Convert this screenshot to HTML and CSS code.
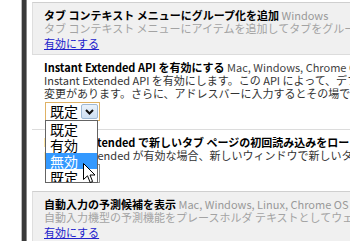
FILE: index.html
```html
<!DOCTYPE html>
<html lang="ja">
<head>
    <meta charset="UTF-8">
    <title>試験運用機能</title>
    <link rel="stylesheet" href="styles.css">
</head>
<body>
    <div class="page">
        <div class="rail"></div>
        <div class="experiments">
            <div class="experiment unsupported">
                <div class="title"><b>タブ コンテキスト メニューにグループ化を追加</b> <span class="platforms">Windows</span></div>
                <div class="desc">タブ コンテキスト メニューにアイテムを追加してタブをグループ化できるようにします。</div>
                <a href="#" class="enable">有効にする</a>
            </div>
            <div class="experiment">
                <div class="title"><b>Instant Extended API を有効にする</b> <span class="platforms">Mac, Windows, Chrome OS</span></div>
                <div class="desc">Instant Extended API を有効にします。この API によって、デフォルトの検索プロバイダに<br>変更があります。さらに、アドレスバーに入力するとその場で検索結果が表示されます。</div>
                <div class="select-wrap">
                    <div class="select focused">
                        <span class="value">既定</span>
                        <span class="arrow"><svg width="9" height="6" viewBox="0 0 9 6"><path d="M1 1 L4.5 4.5 L8 1" fill="none" stroke="#111" stroke-width="2"/></svg></span>
                    </div>
                    <div class="dropdown">
                        <div class="option">既定</div>
                        <div class="option">有効</div>
                        <div class="option selected">無効</div>
                        <div class="option">既定</div>
                    </div>
                    <svg class="cursor" width="13" height="21" viewBox="0 0 13 21">
                        <path d="M0.5 0.5 L0.5 16.5 L4.5 12.8 L7.2 19.5 L9.6 18.5 L7 12 L12 12 Z" fill="#fff" stroke="#000" stroke-width="1" stroke-linejoin="round"/>
                    </svg>
                </div>
            </div>
            <div class="experiment">
                <div class="title"><b>Instant Extended で新しいタブ ページの初回読み込みをローカルで行う</b> <span class="platforms">Mac, Windows, Linux, Chrome OS</span></div>
                <div class="desc">Instant Extended が有効な場合、新しいウィンドウで新しいタブ ページをローカルで読み込みます。</div>
                <div class="select-wrap">
                    <div class="select">
                        <span class="value">既定</span>
                        <span class="arrow"></span>
                    </div>
                </div>
            </div>
            <div class="experiment unsupported">
                <div class="title"><b>自動入力の予測候補を表示</b> <span class="platforms">Mac, Windows, Linux, Chrome OS</span></div>
                <div class="desc">自動入力機型の予測機能をプレースホルダ テキストとしてウェブページに表示します。</div>
                <a href="#" class="enable">有効にする</a>
            </div>
        </div>
    </div>
</body>
</html>
```

FILE: styles.css
```css
html, body {
    margin: 0;
    height: 241px;
    overflow: hidden;
    background-color: #fff;
}
body {
    font-family: "Noto Sans CJK JP", "Noto Sans", sans-serif;
    font-size: 11px;
    line-height: 13px;
    color: #222;
}
.page {
    display: flex;
    padding-left: 22px;
    padding-top: 2px;
}
.rail {
    width: 4px;
    margin-top: -2px;
    height: 243px;
    background-color: #3a3a3a;
    box-shadow: 1px 0 0 #8a8a8a, -1px 0 0 #bbb;
    margin-right: 6px;
    flex-shrink: 0;
}
.experiments {
    width: 700px;
    flex-shrink: 0;
}
.experiment {
    padding: 6px 12px 6px 12px;
    border-top: 1px solid #dcdcdc;
    white-space: nowrap;
}
.experiment.unsupported {
    background-color: #f0f0f0;
    border-left: 1px solid #dedede;
    border-top-color: #cfcfcf;
    padding-left: 11px;
    padding-bottom: 4px;
}
.title b {
    color: #000;
}
.platforms {
    color: #444;
}
.unsupported .platforms {
    color: #999;
}
.unsupported .desc {
    color: #a3a3a3;
}
.desc {
    color: #333;
}
.enable {
    display: inline-block;
    margin-top: 2px;
    color: #2222cc;
    text-decoration: underline;
}
.select-wrap {
    position: relative;
    display: inline-block;
    margin-top: 2px;
    margin-left: 1px;
    margin-bottom: 2px;
}
.select {
    display: flex;
    width: 53px;
    height: 17px;
    border: 1px solid #8e8f8f;
    background-color: #fff;
}
.select.focused {
    border-color: #dfb265;
}
.select .value {
    flex: 1;
    font-size: 14px;
    line-height: 17px;
    padding-left: 4px;
    color: #000;
}
.select .arrow {
    display: flex;
    align-items: center;
    justify-content: center;
    width: 15px;
    margin: 1px;
    border: 1px solid #9fb9d4;
    border-radius: 2px;
    background: linear-gradient(#eaf2fb, #cfe0f2);
}
.dropdown {
    position: absolute;
    left: 0;
    top: 18px;
    width: 51px;
    height: 61px;
    overflow: hidden;
    border: 1px solid #646464;
    background-color: #fff;
    z-index: 2;
}
.option {
    height: 16px;
    line-height: 16px;
    font-size: 14px;
    padding-left: 4px;
    color: #000;
}
.option.selected {
    background-color: #3399ff;
    color: #fff;
}
.cursor {
    position: absolute;
    left: 38px;
    top: 61px;
    z-index: 3;
}
```
